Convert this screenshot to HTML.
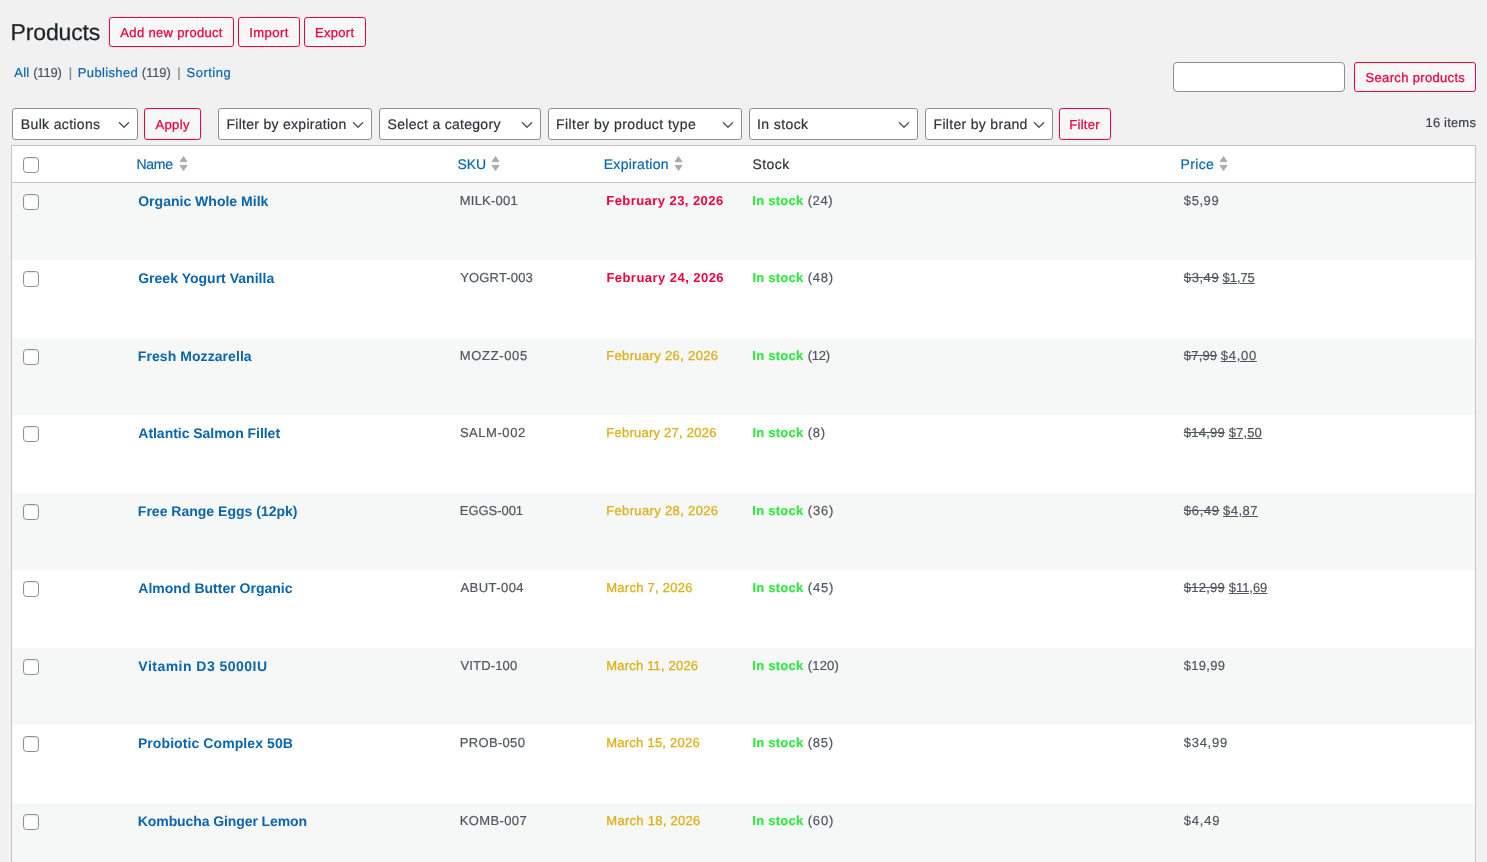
<!DOCTYPE html>
<html lang="en">
<head>
<meta charset="utf-8">
<title>Products</title>
<style>
*{box-sizing:border-box;}
html,body{margin:0;padding:0;}
body{width:1487px;height:862px;overflow:hidden;background:#f1f1f1;color:#3c434a;
  font-family:"Liberation Sans",sans-serif;font-size:13px;line-height:20px;position:relative;}
.wrap{position:absolute;left:0;top:0;width:1487px;height:862px;overflow:hidden;will-change:transform;
  text-rendering:geometricPrecision;-webkit-text-stroke:0.2px;}
a{color:#0a65ad;text-decoration:none;}
ul{list-style:none;margin:0;padding:0;}
.t{position:absolute;white-space:nowrap;display:block;font-weight:400;}
h1{position:absolute;left:0;top:16.5px;-webkit-text-stroke:0.25px #1d2327;margin:0;font-size:23px;font-weight:400;line-height:30px;color:#1d2327;}
.btn{position:absolute;display:block;border:1px solid #ed003e;border-radius:3px;background:#f6f7f7;}
.bt{font-size:13px;line-height:18px;color:#ed003e;-webkit-text-stroke:0.27px #ed003e;}
.sub{position:absolute;left:0;top:63px;font-size:13px;line-height:20px;color:#50575e;}
.sub .sep{color:#8c8f94;-webkit-text-stroke:0.4px #8c8f94;}
.search{position:absolute;left:1173px;top:62px;width:172px;height:30px;border:1px solid #8c8f94;border-radius:4px;background:#fff;}
.sel{position:absolute;top:108px;height:32px;border:1px solid #8c8f94;border-radius:3px;background:#fff;}
.sel svg{position:absolute;right:7px;top:11.5px;}
.st{font-size:14px;line-height:20px;color:#2c3338;}
.count{position:absolute;left:0;top:112.6px;font-size:13px;line-height:20px;color:#3c434a;}
.tbl{position:absolute;left:11px;top:145px;width:1465px;height:760px;border:1px solid #c3c4c7;background:#fff;}
.thead{position:absolute;left:0;top:0;width:1463px;height:37px;border-bottom:1px solid #c3c4c7;}
.th{font-size:14px;line-height:20px;color:#2c3338;}
a.th{color:#0a65ad;}
.srt{position:absolute;}
.row{position:absolute;left:0;width:1463px;}
.row.alt{background:#f6f7f7;}
.cb{position:absolute;left:11px;width:16px;height:16px;border:1px solid #8c8f94;border-radius:3.5px;background:#fff;box-shadow:inset 0 1px 2px rgba(0,0,0,.1);}
.ln{font-size:13px;line-height:19px;color:#50575e;}
.nm{font-size:14px;font-weight:700;line-height:20px;-webkit-text-stroke:0;}
.red{color:#ed003e;font-weight:700;-webkit-text-stroke:0;}
.yel{color:#dcb018;-webkit-text-stroke:0.3px #dcb018;}
b.ins{color:#30e840;font-weight:700;-webkit-text-stroke:0.15px #30e840;}
ins.ln{text-decoration:underline;}

</style>
</head>
<body>
<div class="wrap">
<h1><span id="h1" class="t" style="left:10.57px;top:0px;letter-spacing:-0.139px;">Products</span></h1>
<a class="btn" style="left:109px;top:17px;width:125px;height:30px;"><span id="b1" class="t bt" style="left:10.37px;top:5.5px;letter-spacing:0.326px;">Add new product</span></a>
<a class="btn" style="left:238px;top:17px;width:62px;height:30px;"><span id="b2" class="t bt" style="left:10.27px;top:5.5px;letter-spacing:0.453px;">Import</span></a>
<a class="btn" style="left:304px;top:17px;width:62px;height:30px;"><span id="b3" class="t bt" style="left:9.92px;top:5.5px;letter-spacing:0.314px;">Export</span></a>

<ul class="sub"><a id="s1" class="t" style="left:14.36px;top:0px;letter-spacing:0.142px;">All</a><span id="s2" class="t" style="left:33.18px;top:0px;letter-spacing:-0.157px;">(119)</span><span id="s3" class="t sep" style="left:68.8px;top:0px;">|</span><a id="s4" class="t" style="left:77.81px;top:0px;letter-spacing:0.351px;">Published</a><span id="s5" class="t" style="left:141.8px;top:0px;letter-spacing:-0.106px;">(119)</span><span id="s6" class="t sep" style="left:177.3px;top:0px;">|</span><a id="s7" class="t" style="left:186.59px;top:0px;letter-spacing:0.474px;">Sorting</a></ul>

<form class="searchbox"><div class="search"></div>
<a class="btn" style="left:1354px;top:62px;width:122px;height:30px;"><span id="b4" class="t bt" style="left:10.51px;top:5.7px;letter-spacing:0.336px;">Search products</span></a></form>

<div class="tablenav">
<div class="sel" style="left:12px;width:126px;"><span id="f1" class="t st" style="left:7.87px;top:5px;letter-spacing:0.338px;">Bulk actions</span><svg width="12" height="8" viewBox="0 0 12 8"><path d="M1 1.2l5 5 5-5" fill="none" stroke="#50575e" stroke-width="1.4"/></svg></div>
<a class="btn" style="left:144px;top:108px;width:57px;height:32px;"><span id="b5" class="t bt" style="left:10.38px;top:6.5px;letter-spacing:0.414px;">Apply</span></a>
<div class="sel" style="left:218px;width:154px;"><span id="f2" class="t st" style="left:7.52px;top:5px;letter-spacing:0.278px;">Filter by expiration</span><svg width="12" height="8" viewBox="0 0 12 8"><path d="M1 1.2l5 5 5-5" fill="none" stroke="#50575e" stroke-width="1.4"/></svg></div>
<div class="sel" style="left:379px;width:162px;"><span id="f3" class="t st" style="left:7.55px;top:5px;letter-spacing:0.293px;">Select a category</span><svg width="12" height="8" viewBox="0 0 12 8"><path d="M1 1.2l5 5 5-5" fill="none" stroke="#50575e" stroke-width="1.4"/></svg></div>
<div class="sel" style="left:548px;width:194px;"><span id="f4" class="t st" style="left:7.03px;top:5px;letter-spacing:0.425px;">Filter by product type</span><svg width="12" height="8" viewBox="0 0 12 8"><path d="M1 1.2l5 5 5-5" fill="none" stroke="#50575e" stroke-width="1.4"/></svg></div>
<div class="sel" style="left:749px;width:169px;"><span id="f5" class="t st" style="left:7.1px;top:5px;letter-spacing:0.387px;">In stock</span><svg width="12" height="8" viewBox="0 0 12 8"><path d="M1 1.2l5 5 5-5" fill="none" stroke="#50575e" stroke-width="1.4"/></svg></div>
<div class="sel" style="left:925px;width:128px;"><span id="f6" class="t st" style="left:7.57px;top:5px;letter-spacing:0.309px;">Filter by brand</span><svg width="12" height="8" viewBox="0 0 12 8"><path d="M1 1.2l5 5 5-5" fill="none" stroke="#50575e" stroke-width="1.4"/></svg></div>
<a class="btn" style="left:1059px;top:108px;width:52px;height:32px;"><span id="b6" class="t bt" style="left:9.3px;top:6.5px;letter-spacing:0.261px;">Filter</span></a>
<div class="count"><span id="cnt" class="t" style="left:1425.48px;top:0px;letter-spacing:0.183px;">16 items</span></div>
</div>

<div class="tbl">
<div class="thead">
<div class="cb" style="top:11px;"></div>
<a id="h_name" class="t th" style="left:124.43px;top:8px;letter-spacing:-0.247px;">Name</a><svg class="srt" style="left:166.6px;top:8px" width="9" height="20" viewBox="0 0 9 20"><path d="M4.5 2.6L8 7.7H1Z" fill="#a7aaad" stroke="#a7aaad" stroke-width="0.9" stroke-linejoin="round"/><path d="M4.5 16.5L8 11.4H1Z" fill="#a7aaad" stroke="#a7aaad" stroke-width="0.9" stroke-linejoin="round"/></svg>
<a id="h_sku" class="t th" style="left:445.47px;top:8px;letter-spacing:-0.113px;">SKU</a><svg class="srt" style="left:479.2px;top:8px" width="9" height="20" viewBox="0 0 9 20"><path d="M4.5 2.6L8 7.7H1Z" fill="#a7aaad" stroke="#a7aaad" stroke-width="0.9" stroke-linejoin="round"/><path d="M4.5 16.5L8 11.4H1Z" fill="#a7aaad" stroke="#a7aaad" stroke-width="0.9" stroke-linejoin="round"/></svg>
<a id="h_exp" class="t th" style="left:591.72px;top:8px;letter-spacing:0.289px;">Expiration</a><svg class="srt" style="left:661.8px;top:8px" width="9" height="20" viewBox="0 0 9 20"><path d="M4.5 2.6L8 7.7H1Z" fill="#a7aaad" stroke="#a7aaad" stroke-width="0.9" stroke-linejoin="round"/><path d="M4.5 16.5L8 11.4H1Z" fill="#a7aaad" stroke="#a7aaad" stroke-width="0.9" stroke-linejoin="round"/></svg>
<span id="h_stk" class="t th" style="left:740.53px;top:8px;letter-spacing:0.419px;">Stock</span>
<a id="h_prc" class="t th" style="left:1168.58px;top:8px;letter-spacing:0.350px;">Price</a><svg class="srt" style="left:1206.5px;top:8px" width="9" height="20" viewBox="0 0 9 20"><path d="M4.5 2.6L8 7.7H1Z" fill="#a7aaad" stroke="#a7aaad" stroke-width="0.9" stroke-linejoin="round"/><path d="M4.5 16.5L8 11.4H1Z" fill="#a7aaad" stroke="#a7aaad" stroke-width="0.9" stroke-linejoin="round"/></svg>
</div>
<div class="row alt" style="top:37px;height:77px;">
<div class="cb" style="top:11px;"></div>
<a id="n0" class="t nm" style="left:126.22px;top:8px;letter-spacing:0.012px;">Organic Whole Milk</a>
<span id="k0" class="t ln" style="left:447.76px;top:8px;letter-spacing:0.219px;">MILK-001</span>
<span id="e0" class="t ln red" style="left:594.31px;top:8px;letter-spacing:0.436px;">February 23, 2026</span>
<b id="i0" class="t ln ins" style="left:740.36px;top:8px;letter-spacing:0.247px;">In stock</b> <span id="q0" class="t ln" style="left:795.64px;top:8px;letter-spacing:0.609px;">(24)</span>
<span id="pn0" class="t ln" style="left:1171.85px;top:8px;letter-spacing:0.560px;">$5,99</span>
</div>
<div class="row" style="top:114px;height:78px;">
<div class="cb" style="top:11px;"></div>
<a id="n1" class="t nm" style="left:126.2px;top:8px;letter-spacing:0.018px;">Greek Yogurt Vanilla</a>
<span id="k1" class="t ln" style="left:448.22px;top:8px;letter-spacing:0.165px;">YOGRT-003</span>
<span id="e1" class="t ln red" style="left:594.39px;top:8px;letter-spacing:0.459px;">February 24, 2026</span>
<b id="i1" class="t ln ins" style="left:740.44px;top:8px;letter-spacing:0.226px;">In stock</b> <span id="q1" class="t ln" style="left:795.68px;top:8px;letter-spacing:0.758px;">(48)</span>
<del id="po1" class="t ln" style="left:1171.87px;top:8px;letter-spacing:0.560px;">$3,49</del> <ins id="pn1" class="t ln" style="left:1210.62px;top:8px;letter-spacing:-0.094px;">$1,75</ins>
</div>
<div class="row alt" style="top:192px;height:77px;">
<div class="cb" style="top:11px;"></div>
<a id="n2" class="t nm" style="left:125.83px;top:8px;letter-spacing:0.067px;">Fresh Mozzarella</a>
<span id="k2" class="t ln" style="left:447.76px;top:8px;letter-spacing:0.665px;">MOZZ-005</span>
<span id="e2" class="t ln yel" style="left:594.19px;top:8px;letter-spacing:0.355px;">February 26, 2026</span>
<b id="i2" class="t ln ins" style="left:740.36px;top:8px;letter-spacing:0.247px;">In stock</b> <span id="q2" class="t ln" style="left:795.64px;top:8px;letter-spacing:-0.207px;">(12)</span>
<del id="po2" class="t ln" style="left:1171.85px;top:8px;letter-spacing:0.161px;">$7,99</del> <ins id="pn2" class="t ln" style="left:1208.78px;top:8px;letter-spacing:0.703px;">$4,00</ins>
</div>
<div class="row" style="top:269px;height:78px;">
<div class="cb" style="top:11px;"></div>
<a id="n3" class="t nm" style="left:126.3px;top:8px;letter-spacing:-0.029px;">Atlantic Salmon Fillet</a>
<span id="k3" class="t ln" style="left:447.89px;top:8px;letter-spacing:0.551px;">SALM-002</span>
<span id="e3" class="t ln yel" style="left:594.27px;top:8px;letter-spacing:0.245px;">February 27, 2026</span>
<b id="i3" class="t ln ins" style="left:740.44px;top:8px;letter-spacing:0.226px;">In stock</b> <span id="q3" class="t ln" style="left:795.66px;top:8px;letter-spacing:0.806px;">(8)</span>
<del id="po3" class="t ln" style="left:1171.85px;top:8px;letter-spacing:0.205px;">$14,99</del> <ins id="pn3" class="t ln" style="left:1216.7px;top:8px;letter-spacing:0.137px;">$7,50</ins>
</div>
<div class="row alt" style="top:347px;height:77px;">
<div class="cb" style="top:11px;"></div>
<a id="n4" class="t nm" style="left:125.83px;top:8px;letter-spacing:0.008px;">Free Range Eggs (12pk)</a>
<span id="k4" class="t ln" style="left:447.79px;top:8px;letter-spacing:-0.041px;">EGGS-001</span>
<span id="e4" class="t ln yel" style="left:594.19px;top:8px;letter-spacing:0.355px;">February 28, 2026</span>
<b id="i4" class="t ln ins" style="left:740.36px;top:8px;letter-spacing:0.247px;">In stock</b> <span id="q4" class="t ln" style="left:795.83px;top:8px;letter-spacing:0.786px;">(36)</span>
<del id="po4" class="t ln" style="left:1171.85px;top:8px;letter-spacing:0.663px;">$6,49</del> <ins id="pn4" class="t ln" style="left:1211.02px;top:8px;letter-spacing:0.485px;">$4,87</ins>
</div>
<div class="row" style="top:424px;height:78px;">
<div class="cb" style="top:11px;"></div>
<a id="n5" class="t nm" style="left:126.3px;top:8px;letter-spacing:0.013px;">Almond Butter Organic</a>
<span id="k5" class="t ln" style="left:448.46px;top:8px;letter-spacing:0.447px;">ABUT-004</span>
<span id="e5" class="t ln yel" style="left:594.27px;top:8px;letter-spacing:0.257px;">March 7, 2026</span>
<b id="i5" class="t ln ins" style="left:740.44px;top:8px;letter-spacing:0.226px;">In stock</b> <span id="q5" class="t ln" style="left:795.83px;top:8px;letter-spacing:0.784px;">(45)</span>
<del id="po5" class="t ln" style="left:1171.85px;top:8px;letter-spacing:0.207px;">$12,99</del> <ins id="pn5" class="t ln" style="left:1216.78px;top:8px;letter-spacing:-0.050px;">$11,69</ins>
</div>
<div class="row alt" style="top:502px;height:77px;">
<div class="cb" style="top:11px;"></div>
<a id="n6" class="t nm" style="left:126.36px;top:8px;letter-spacing:0.473px;">Vitamin D3 5000IU</a>
<span id="k6" class="t ln" style="left:448.43px;top:8px;letter-spacing:0.171px;">VITD-100</span>
<span id="e6" class="t ln yel" style="left:594.3px;top:8px;letter-spacing:0.185px;">March 11, 2026</span>
<b id="i6" class="t ln ins" style="left:740.36px;top:8px;letter-spacing:0.247px;">In stock</b> <span id="q6" class="t ln" style="left:795.82px;top:8px;letter-spacing:0.137px;">(120)</span>
<span id="pn6" class="t ln" style="left:1171.78px;top:8px;letter-spacing:0.292px;">$19,99</span>
</div>
<div class="row" style="top:579px;height:78px;">
<div class="cb" style="top:11px;"></div>
<a id="n7" class="t nm" style="left:125.91px;top:8px;letter-spacing:0.086px;">Probiotic Complex 50B</a>
<span id="k7" class="t ln" style="left:447.77px;top:8px;letter-spacing:0.321px;">PROB-050</span>
<span id="e7" class="t ln yel" style="left:594.27px;top:8px;letter-spacing:0.236px;">March 15, 2026</span>
<b id="i7" class="t ln ins" style="left:740.44px;top:8px;letter-spacing:0.226px;">In stock</b> <span id="q7" class="t ln" style="left:795.83px;top:8px;letter-spacing:0.697px;">(85)</span>
<span id="pn7" class="t ln" style="left:1171.69px;top:8px;letter-spacing:0.742px;">$34,99</span>
</div>
<div class="row alt" style="top:657px;height:77px;">
<div class="cb" style="top:11px;"></div>
<a id="n8" class="t nm" style="left:125.83px;top:8px;letter-spacing:-0.092px;">Kombucha Ginger Lemon</a>
<span id="k8" class="t ln" style="left:447.77px;top:8px;letter-spacing:0.366px;">KOMB-007</span>
<span id="e8" class="t ln yel" style="left:594.3px;top:8px;letter-spacing:0.272px;">March 18, 2026</span>
<b id="i8" class="t ln ins" style="left:740.36px;top:8px;letter-spacing:0.247px;">In stock</b> <span id="q8" class="t ln" style="left:795.67px;top:8px;letter-spacing:0.855px;">(60)</span>
<span id="pn8" class="t ln" style="left:1171.78px;top:8px;letter-spacing:0.782px;">$4,49</span>
</div>
</div>
</div>
</body>
</html>
